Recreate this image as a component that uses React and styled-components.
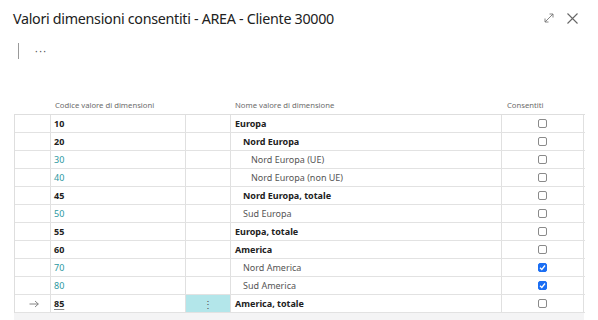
import React from 'react'
import styled, { createGlobalStyle } from 'styled-components'

const GlobalStyle = createGlobalStyle`
  body {
    margin: 0;
    background: #fff;
    font-family: "Noto Sans", "Open Sans", sans-serif;
  }
`;

const rows = [
  { code: '10', name: 'Europa', bold: true, level: 0 },
  { code: '20', name: 'Nord Europa', bold: true, level: 1 },
  { code: '30', name: 'Nord Europa (UE)', level: 2 },
  { code: '40', name: 'Nord Europa (non UE)', level: 2 },
  { code: '45', name: 'Nord Europa, totale', bold: true, level: 1 },
  { code: '50', name: 'Sud Europa', level: 1 },
  { code: '55', name: 'Europa, totale', bold: true, level: 0 },
  { code: '60', name: 'America', bold: true, level: 0 },
  { code: '70', name: 'Nord America', level: 1, checked: true },
  { code: '80', name: 'Sud America', level: 1, checked: true },
  { code: '85', name: 'America, totale', bold: true, level: 0, current: true },
];

const Page = styled.div`
  width: 598px;
  height: 320px;
  overflow: hidden;
  display: flex;
  flex-direction: column;
`;

const TitleBar = styled.div`
  display: flex;
  align-items: center;
  justify-content: space-between;
  padding: 7px 19px 0 13px;
  height: 22px;
`;

const Title = styled.h1`
  margin: 0;
  font-size: 14.3px;
  letter-spacing: -0.3px;
  font-weight: 400;
  color: #212121;
`;

const Icons = styled.div`
  display: flex;
  gap: 11px;
  align-items: center;
`;

const ActionBar = styled.div`
  display: flex;
  align-items: center;
  margin: 14px 0 0 18px;
  height: 16px;
  border-left: 1px solid #9a9a9a;
  padding-left: 16px;
  color: #555;
  font-size: 10px;
  letter-spacing: 1.5px;
`;

const HeaderRow = styled.div`
  display: grid;
  grid-template-columns: 37px 135px 45px 271px 82px;
  margin: 36px 0 0 14px;
  height: 19px;
  align-items: center;
  font-size: 7.7px;
  color: #6b6b6b;
`;

const HeadCell = styled.div`
  padding-left: ${p => p.$pad || 4}px;
`;

const Table = styled.div`
  margin-left: 14px;
  width: 570px;
  border-top: 1px solid #dedede;
  border-left: 1px solid #dedede;
`;

const Row = styled.div`
  display: grid;
  grid-template-columns: 36px 135px 45px 271px 82px;
  box-sizing: border-box;
  height: 18px;
  border-bottom: 1px solid #e2e2e2;
  font-size: 9px;
  color: #212121;
`;

const Cell = styled.div`
  display: flex;
  align-items: center;
  justify-content: ${p => p.$center ? 'center' : 'flex-start'};
  border-right: 1px solid #e0e0e0;
  padding-left: ${p => p.$pad || 0}px;
  background: ${p => p.$active ? '#b3e6ea' : 'transparent'};
  color: ${p => p.$link ? '#2c98a1' : 'inherit'};
  font-weight: ${p => p.$bold ? 700 : 400};
  white-space: nowrap;
`;

const Code = styled.span`
  text-decoration: ${p => p.$current ? 'underline' : 'none'};
  text-decoration-color: #888;
  text-underline-offset: 2px;
`;

const Dots = styled.span`
  color: #555;
  font-size: 10px;
  line-height: 1;
`;

const Box = styled.span`
  width: 9px;
  height: 9px;
  box-sizing: border-box;
  border-radius: 2px;
  border: 1px solid ${p => p.$checked ? '#1b6ef3' : '#8a8a8a'};
  background: ${p => p.$checked ? '#1b6ef3' : '#fff'};
  display: flex;
  align-items: center;
  justify-content: center;
`;

const Footer = styled.div`
  margin-left: 14px;
  width: 570px;
  flex: 1;
  background: #f4f4f5;
`;

const ExpandIcon = () => (
  <svg width="12" height="12" viewBox="0 0 12 12" fill="none" stroke="#777" strokeWidth="0.9">
    <path d="M2 10 L10 2 M6.5 2 H10 V5.5 M2 6.5 V10 H5.5" />
  </svg>
);

const CloseIcon = () => (
  <svg width="13" height="13" viewBox="0 0 13 13" fill="none" stroke="#666" strokeWidth="1.1">
    <path d="M1.5 1.5 L11.5 11.5 M11.5 1.5 L1.5 11.5" />
  </svg>
);

const RowArrow = () => (
  <svg width="10" height="8" viewBox="0 0 10 8" fill="none" stroke="#777" strokeWidth="0.9" style={{ marginLeft: 14 }}>
    <path d="M0.5 4 H9.3 M6 1 L9.3 4 L6 7" />
  </svg>
);

const Check = () => (
  <svg width="7" height="7" viewBox="0 0 7 7" fill="none" stroke="#fff" strokeWidth="1.3">
    <path d="M1 3.8 L2.8 5.5 L6 1.5" />
  </svg>
);

const App = () => {
  return (
    <Page>
      <GlobalStyle />
      <TitleBar>
        <Title>Valori dimensioni consentiti - AREA - Cliente 30000</Title>
        <Icons>
          <ExpandIcon />
          <CloseIcon />
        </Icons>
      </TitleBar>
      <ActionBar>···</ActionBar>
      <HeaderRow>
        <div />
        <HeadCell>Codice valore di dimensioni</HeadCell>
        <div />
        <HeadCell>Nome valore di dimensione</HeadCell>
        <HeadCell $pad={5}>Consentiti</HeadCell>
      </HeaderRow>
      <Table>
        {rows.map((r, i) => (
          <Row key={i}>
            <Cell>{r.current && <RowArrow />}</Cell>
            <Cell $pad={3} $bold={r.bold} $link={!r.bold}>
              <Code $current={r.current}>{r.code}</Code>
            </Cell>
            <Cell $center $active={r.current}>{r.current && <Dots>⋮</Dots>}</Cell>
            <Cell $pad={4 + r.level * 8} $bold={r.bold} style={{ color: r.bold ? '#212121' : '#555' }}>
              {r.name}
            </Cell>
            <Cell $center>
              <Box $checked={r.checked}>{r.checked && <Check />}</Box>
            </Cell>
          </Row>
        ))}
      </Table>
      <Footer />
    </Page>
  )
}

export default App
